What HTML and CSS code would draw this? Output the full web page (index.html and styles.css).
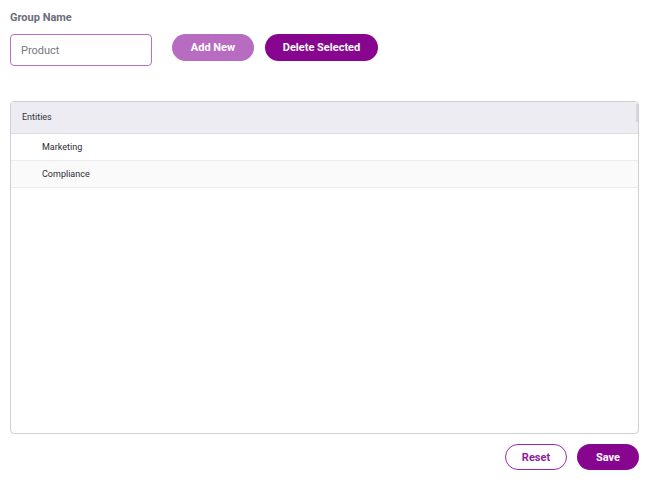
FILE: index.html
```html
<!DOCTYPE html>
<html>
<head>
<meta charset="utf-8">
<link rel="stylesheet" href="styles.css">
</head>
<body>
<div class="page">
  <label class="label">Group Name</label>
  <div class="toolbar">
    <input class="input" type="text" placeholder="Product">
    <button class="btn btn-light">Add New</button>
    <button class="btn btn-dark">Delete Selected</button>
  </div>
  <div class="table">
    <div class="thead">Entities<span class="resizer"></span></div>
    <div class="row">Marketing</div>
    <div class="row alt">Compliance</div>
  </div>
  <div class="footer">
    <button class="btn btn-outline">Reset</button>
    <button class="btn btn-dark btn-save">Save</button>
  </div>
</div>
</body>
</html>
```
FILE: styles.css
```css
* { box-sizing: border-box; }
html, body { margin: 0; padding: 0; background: #fff; }
body { font-family: Roboto, "Noto Sans", sans-serif; }
.page { padding: 10px 9px 0 10px; width: 648px; }
.label { display: block; font-size: 11px; font-weight: 700; color: #6c6c7c; line-height: 14px; margin-top: 1px; }
.toolbar { display: flex; align-items: flex-start; margin-top: 9px; }
.input {
  width: 142px; height: 32px; border: 1px solid #b96fc6; border-radius: 4px;
  padding: 0 10px; font-family: inherit; font-size: 11px; color: #333; outline: none;
}
.input::placeholder { color: #777780; }
.btn {
  font-family: inherit; font-weight: 700; font-size: 11px; border-radius: 14px;
  border: none; height: 27px; cursor: pointer; padding: 0;
}
.btn-light { background: #b76cc2; color: #fff; width: 82px; margin-left: 20px; }
.btn-dark { background: #87058f; color: #fff; width: 113px; margin-left: 11px; }
.table {
  margin-top: 35px; height: 333px; border: 1px solid #cfcfd4; border-radius: 4px; overflow: hidden;
  width: 629px;
}
.thead {
  position: relative; height: 32px; background: #ececf2; border-bottom: 1px solid #dcdce2;
  font-size: 9px; color: #33333d; padding-left: 11px; line-height: 31px;
}
.resizer { position: absolute; right: 0; top: 2px; width: 2px; height: 18px; background: #d6d6dc; }
.row {
  height: 27px; border-bottom: 1px solid #ececef; font-size: 9px; color: #2c2c34;
  padding-left: 31px; line-height: 26px;
}
.row.alt { background: #fafafa; }
.footer { display: flex; justify-content: flex-end; margin-top: 10px; width: 629px; }
.btn-outline { background: #fff; border: 1px solid #9a2aa4; color: #8f1c98; width: 62px; height: 26px; }
.btn-save { width: 62px; height: 26px; margin-left: 10px; }
```
